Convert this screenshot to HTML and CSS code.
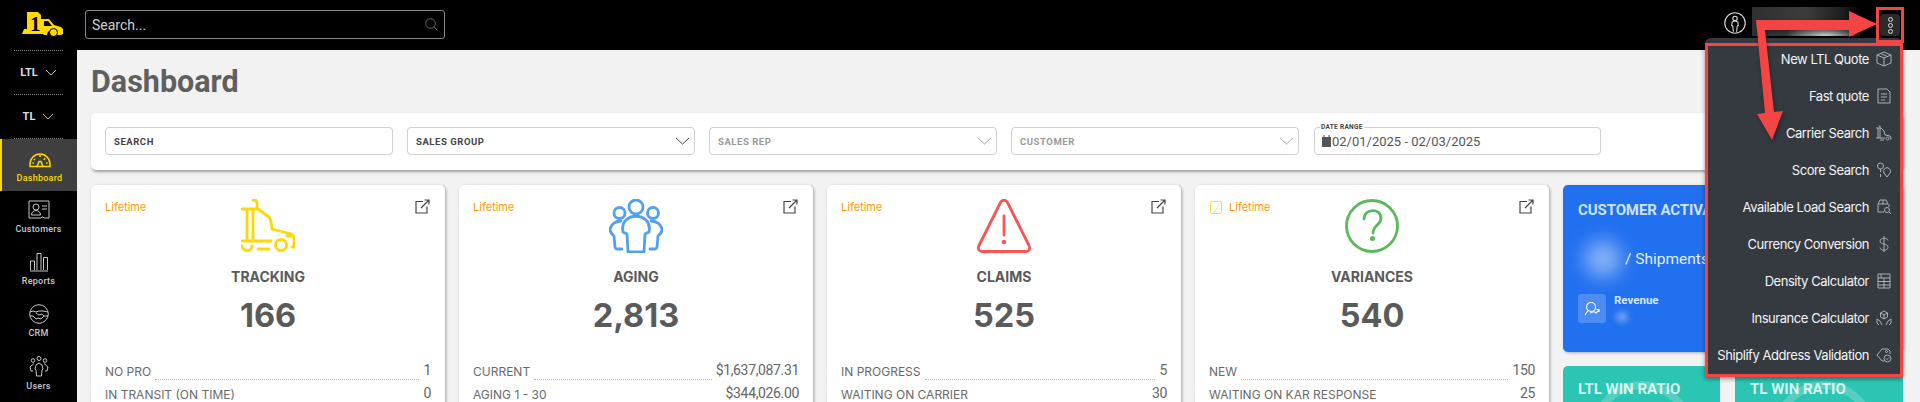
FILE: index.html
```html
<!DOCTYPE html>
<html lang="en">
<head>
<meta charset="utf-8">
<title>Dashboard</title>
<link rel="stylesheet" href="styles.css">
</head>
<body>
<div class="app">
  <aside class="sidebar">
    <div class="logo">
      <svg width="42" height="26" viewBox="0 0 42 26"><path fill="#ffd800" d="M5 0h11l3 3v4h8l5 6 7 2 2 2v5l-2 1h-4a5 5 0 0 0-10 0h-3l-1-1H0l2-5h3z"/><circle cx="31.500" cy="20.500" r="4" fill="#ffd800" stroke="#000" stroke-width="1"/><path fill="#000" d="M22 9h4l4 5h-8z"/><text x="8" y="19" class="logo-one">1</text></svg>
    </div>
    <div class="mode">LTL <svg width="12" height="7" viewBox="0 0 12 7"><path d="M1 1l5 5 5-5" class="thin"/></svg></div>
    <div class="mode">TL <svg width="12" height="7" viewBox="0 0 12 7"><path d="M1 1l5 5 5-5" class="thin"/></svg></div>
    <nav class="nav">
      <a class="nav-item active">
        <svg width="22" height="16" viewBox="0 0 22 16"><path d="M1 14.500V12a10 10 0 0 1 20 0v2.500zM8 14.500l2-5h2l2 5M5 7l1 1M11 3v2M16 6l-1 2M3.500 11h1.500M17 11h1.500" class="nav-icon"/></svg>
        <span>Dashboard</span>
      </a>
      <a class="nav-item">
        <svg width="22" height="20" viewBox="0 0 22 20"><path d="M1 1h20v17h-5l-1-1h-1l-1 1H1z" class="nav-icon"/><circle cx="8" cy="7" r="3" class="nav-icon"/><path d="M3.500 15c0-6 9-6 9 0zM14 6h5M14 9h5" class="nav-icon"/></svg>
        <span>Customers</span>
      </a>
      <a class="nav-item">
        <svg width="20" height="20" viewBox="0 0 20 20"><path d="M1 19h18M1.500 18V9h4v9M8 18V1.500h4V18M14.500 18V5.500h4V18" class="nav-icon"/></svg>
        <span>Reports</span>
      </a>
      <a class="nav-item">
        <svg width="20" height="20" viewBox="0 0 20 20"><circle cx="10" cy="10" r="9.300" class="nav-icon"/><path d="M1 8l3-1 3 1 3-1 4 0 5 1M1 12l3 0 3 3 2-1 3 1 3-3h4M7 9l3 2 3-1 2 2" class="nav-icon"/></svg>
        <span>CRM</span>
      </a>
      <a class="nav-item">
        <svg width="20" height="21" viewBox="0 0 20 21"><circle cx="10" cy="2.500" r="2" class="nav-icon"/><circle cx="4" cy="4.500" r="1.800" class="nav-icon"/><circle cx="16" cy="4.500" r="1.800" class="nav-icon"/><path d="M7.500 20l-.5-6-1-1 1-4 3-2 3 2 1 4-1 1-.5 6zM5 7.500L1 11l1 4h2M15 7.500l4 3.500-1 4h-2" class="nav-icon"/></svg>
        <span>Users</span>
      </a>
    </nav>
  </aside>

  <div class="main">
    <header class="topbar">
      <div class="global-search">
        <span>Search...</span>
        <svg width="13" height="13" viewBox="0 0 13 13"><circle cx="5.500" cy="5.500" r="4.800" class="search-glass"/><path d="M9 9l3.500 3.500" class="search-glass"/></svg>
      </div>
    </header>

    <div class="content">
      <h1>Dashboard</h1>
      <section class="filters">
        <div class="field strong">SEARCH</div>
        <div class="field strong">SALES GROUP<svg width="15" height="8" viewBox="0 0 15 8"><path d="M1 1l6.500 6L14 1" class="chev-dark"/></svg></div>
        <div class="field">SALES REP<svg width="15" height="8" viewBox="0 0 15 8"><path d="M1 1l6.500 6L14 1" class="chev"/></svg></div>
        <div class="field">CUSTOMER<svg width="15" height="8" viewBox="0 0 15 8"><path d="M1 1l6.500 6L14 1" class="chev"/></svg></div>
        <div class="field date">
          <label>DATE RANGE</label>
          <svg width="9" height="12" viewBox="0 0 9 12"><path fill="#555" d="M0 2h1.500V0h1v2h4V0h1v2H9v10H0z"/></svg>
          <span>02/01/2025 - 02/03/2025</span>
        </div>
      </section>

      <section class="board">
        <article class="card">
          <div class="card-head"><span class="lifetime">Lifetime</span>
            <svg class="open" width="15" height="15" viewBox="0 0 15 15"><path d="M8 2.500H1v11.500h11V7.500M6 9l8-8M9.500 1H14v4.500" class="open-stroke"/></svg></div>
          <svg class="hero" width="54" height="54" viewBox="0 0 54 54"><path d="M1 10h16M6 10v32M12 10v32M12 1h1c2 0 3 1 3 3v6M17 10l11 8c2 2 2 4 3 12l19 5c2 1 3 2 3 4v9h-2M1 42h29M1 47c1 6 10 6 10 0M17 50h11M46 37h5" class="tk"/><circle cx="40" cy="46" r="5.500" class="tk"/></svg>
          <h2>TRACKING</h2>
          <div class="big">166</div>
          <div class="row"><span>NO PRO</span><i></i><b>1</b></div>
          <div class="row"><span>IN TRANSIT (ON TIME)</span><i></i><b>0</b></div>
        </article>

        <article class="card">
          <div class="card-head"><span class="lifetime">Lifetime</span>
            <svg class="open" width="15" height="15" viewBox="0 0 15 15"><path d="M8 2.500H1v11.500h11V7.500M6 9l8-8M9.500 1H14v4.500" class="open-stroke"/></svg></div>
          <svg class="hero" width="54" height="54" viewBox="0 0 54 54"><circle cx="27" cy="8" r="7" class="ag"/><circle cx="10.500" cy="14" r="5.500" class="ag"/><circle cx="44" cy="14" r="5.500" class="ag"/><path d="M19 53l-1-18-4-2c-1-5 0-9 3-12 6-5 14-5 20 0 3 3 4 7 3 12l-4 2-1 18zM12 22c-5 0-10 3-11 8 0 3 1 4 4 7l1 11c0 1 1 2 2 2h5M42 22c5 0 10 3 11 8 0 3-1 4-4 7l-1 11c0 1-1 2-2 2h-5" class="ag"/></svg>
          <h2>AGING</h2>
          <div class="big">2,813</div>
          <div class="row"><span>CURRENT</span><i></i><b>$1,637,087.31</b></div>
          <div class="row"><span>AGING 1 - 30</span><i></i><b>$344,026.00</b></div>
        </article>

        <article class="card">
          <div class="card-head"><span class="lifetime">Lifetime</span>
            <svg class="open" width="15" height="15" viewBox="0 0 15 15"><path d="M8 2.500H1v11.500h11V7.500M6 9l8-8M9.500 1H14v4.500" class="open-stroke"/></svg></div>
          <svg class="hero" width="54" height="54" viewBox="0 0 54 54"><path d="M23.500 3.500c1.500-3 5.500-3 7 0l21.500 43c1.500 3.500 0 6-3 6H5c-3 0-4.500-2.500-3-6z" class="cl"/><path d="M27 17v19" class="cl"/><circle cx="27" cy="43" r="2.300" class="cl-dot"/></svg>
          <h2>CLAIMS</h2>
          <div class="big">525</div>
          <div class="row"><span>IN PROGRESS</span><i></i><b>5</b></div>
          <div class="row"><span>WAITING ON CARRIER</span><i></i><b>30</b></div>
        </article>

        <article class="card">
          <div class="card-head"><span class="check"><svg width="12" height="12" viewBox="0 0 12 12"><path d="M3 10.500L9 1" class="check-mark"/></svg></span><span class="lifetime">Lifetime</span>
            <svg class="open" width="15" height="15" viewBox="0 0 15 15"><path d="M8 2.500H1v11.500h11V7.500M6 9l8-8M9.500 1H14v4.500" class="open-stroke"/></svg></div>
          <svg class="hero" width="54" height="54" viewBox="0 0 54 54"><circle cx="27" cy="27" r="25.500" class="va"/><path d="M19 20c0-11 17-11 17-1 0 7-8 7-8 15" class="va"/><circle cx="27.500" cy="39.500" r="2.500" class="va-dot"/></svg>
          <h2>VARIANCES</h2>
          <div class="big">540</div>
          <div class="row"><span>NEW</span><i></i><b>150</b></div>
          <div class="row"><span>WAITING ON KAR RESPONSE</span><i></i><b>25</b></div>
        </article>

        <div class="side">
          <article class="activation">
            <h3>CUSTOMER ACTIVATION</h3>
            <div class="ship"><span class="blob"></span><span>/ Shipments</span></div>
            <div class="revenue">
              <span class="rev-icon"><svg width="16" height="16" viewBox="0 0 16 16"><circle cx="7" cy="6" r="4.500" class="rev"/><path d="M4 9.500L1 14M6 12l4-1.500 2 1.500 3-3M12.500 8.500h2.500V11" class="rev"/></svg></span>
              <div><strong>Revenue</strong><span class="blob-small"></span></div>
            </div>
          </article>
          <div class="ratios">
            <article class="ratio"><h3>LTL WIN RATIO</h3><span class="ring"></span></article>
            <article class="ratio"><h3>TL WIN RATIO</h3><span class="ring"></span></article>
          </div>
        </div>
      </section>
    </div>
  </div>
</div>

<div class="account">
  <svg width="22" height="22" viewBox="0 0 20 20"><circle cx="10" cy="10" r="9.300" class="acct"/><circle cx="10" cy="5.800" r="2" class="acct"/><path d="M8.500 18l-.5-5-1-1 .5-3 2.500-1 2.500 1 .5 3-1 1-.5 5" class="acct"/></svg>
  <span class="acct-name"></span>
  <span class="kebab"><i></i><i></i><i></i></span>
</div>

<div class="menu">
  <ul class="menu-list">
    <li>New LTL Quote<svg width="16" height="16" viewBox="0 0 16 16"><path d="M1 4l7-3 7 3v8l-7 3-7-3zM1 4l7 3 7-3M8 7v8M4.500 2.500l7 3" class="mi"/></svg></li>
    <li>Fast quote<svg width="16" height="16" viewBox="0 0 16 16"><path d="M2 1h9l3 3v11H2zM5 6h6M5 9h6M5 12h4" class="mi"/></svg></li>
    <li>Carrier Search<svg width="16" height="16" viewBox="0 0 16 16"><path d="M0 3h5M2 3v10M4 3v10M3 1h1v2M5 3l3 3 1 4 5 1 1 2v1h-1M0 13h9M4 15h4" class="mi"/><circle cx="11.500" cy="13.500" r="1.500" class="mi"/></svg></li>
    <li>Score Search<svg width="16" height="16" viewBox="0 0 16 16"><circle cx="4.500" cy="4" r="3" class="mi"/><path d="M4.500 7v3M4.500 12v3M11 15l-3-4a3.500 3.500 0 1 1 6 0z" class="mi"/></svg></li>
    <li>Available Load Search<svg width="16" height="16" viewBox="0 0 16 16"><path d="M4 1h6l2 4H2zM2 5v8h6M13 5v3M7 1v4" class="mi"/><circle cx="11" cy="11" r="2.500" class="mi"/><path d="M13 13l2 2" class="mi"/></svg></li>
    <li>Currency Conversion<svg width="16" height="16" viewBox="0 0 16 16"><path d="M12 4.500C12 1.500 4 1.500 4 5c0 4 8 2 8 6.500C12 15 4 15 4 11.500M8 0v16" class="mi"/></svg></li>
    <li>Density Calculator<svg width="16" height="16" viewBox="0 0 16 16"><path d="M2 1h12v14H2zM2 5h12M2 8.500h12M2 12h12M8 5v10M5 1v4" class="mi"/></svg></li>
    <li>Insurance Calculator<svg width="16" height="16" viewBox="0 0 16 16"><path d="M8 1l3.500 2v4L8 9 4.500 7V3zM4.500 3L8 5l3.500-2M8 5v4M1 9l3 2 2 4M15 9l-3 2-2 4M1 9v4l2 2M15 9v4l-2 2" class="mi"/></svg></li>
    <li>Shiplify Address Validation<svg width="16" height="16" viewBox="0 0 16 16"><path d="M1 8l5-6h6l2 2v3M1 8l5 6h2" class="mi"/><circle cx="11.500" cy="11.500" r="3.500" class="mi"/><path d="M10 11.500l1 1 2-2" class="mi"/><circle cx="10.500" cy="4.500" r="1" class="mi"/></svg></li>
  </ul>
</div>

<span class="button-highlight"></span>
<svg class="arrows" width="1920" height="402" viewBox="0 0 1920 402">
  <path d="M1756 20H1849V11L1877 24 1849 37V30H1765L1774 112 1783 111 1772 140 1757 114 1765 113z" class="arrow"/>
</svg>
</body>
</html>
```

FILE: styles.css
```css
* { box-sizing: border-box; margin: 0; padding: 0; }
html, body { height: 402px; overflow: hidden; }
body { font-family: Inter, "Liberation Sans", sans-serif; background: #f2f2f2; color: #5a5a5a; position: relative; }
svg { display: block; flex: none; }

.app { display: flex; height: 402px; }

/* sidebar */
.sidebar { width: 77px; flex: none; background: #000; display: flex; flex-direction: column; }
.logo { height: 51px; margin: 0 14px; padding: 12px 0 0 8px; border-bottom: 1px dotted #888; }
.logo-one { font: 900 21px "Liberation Serif", serif; fill: #000; }
.mode { height: 44px; margin: 0 14px; border-bottom: 1px dotted #888; display: flex; align-items: center; justify-content: center; gap: 7px; color: #ddd; font: 700 11px Roboto, sans-serif; }
.thin { fill: none; stroke: #bbb; stroke-width: 1; }
.nav { display: flex; flex-direction: column; }
.nav-item { height: 52px; display: flex; flex-direction: column; align-items: center; justify-content: center; gap: 4px; color: #c8c8c8; font: 500 9px Roboto, sans-serif; letter-spacing: .25px; }
.nav-item.active { background: #3e3f3e; border-left: 2px solid #ffd800; color: #ffd800; padding-top: 4px; gap: 5px; }
.nav-icon { fill: none; stroke: #c8c8c8; stroke-width: 1; }
.active .nav-icon { stroke: #ffd800; stroke-width: 1.500; }

/* top bar */
.main { flex: 1; min-width: 0; display: flex; flex-direction: column; }
.topbar { height: 50px; flex: none; background: #000; padding: 10px 8px; }
.global-search { width: 360px; height: 29px; border: 1px solid #888; border-radius: 3px; display: flex; align-items: center; justify-content: space-between; padding: 0 6px; color: #d0d0d0; font: 400 14px Roboto, sans-serif; }
.search-glass { fill: none; stroke: #666; stroke-width: 1; }

/* content */
.content { padding: 15px 17px 0 14px; }
h1 { font: 700 30.500px/34px Roboto, sans-serif; color: #5f5f5f; margin-bottom: 14px; height: 34px; }
.filters { height: 57px; background: #fff; border-radius: 5px; box-shadow: 1px 2px 3px rgba(0,0,0,.35); padding: 14px; display: flex; gap: 14px; }
.field { width: 288px; height: 28px; border: 1px solid #d0d0d0; border-radius: 4px; display: flex; align-items: center; justify-content: space-between; padding: 0 4px 0 8px; font: 700 9.500px Roboto, sans-serif; letter-spacing: .55px; color: #999; }
.field.strong { color: #444; }
.chev { fill: none; stroke: #aaa; }
.chev-dark { fill: none; stroke: #444; }
.field.date { position: relative; justify-content: flex-start; gap: 1px; font: 400 13px Roboto, sans-serif; letter-spacing: 0; color: #555; margin-left: 1px; padding-left: 7px; width: 287px; }
.field.date label { position: absolute; left: 5px; top: -5px; padding: 0 1px; background: #fff; font: 700 6.500px/8px Roboto, sans-serif; letter-spacing: .3px; color: #444; }

/* cards */
.board { display: flex; gap: 14px; margin-top: 15px; align-items: flex-start; }
.card { position: relative; width: 354px; flex: none; height: 240px; background: #fff; border-radius: 5px; box-shadow: 1px 1px 3px rgba(0,0,0,.35); padding: 14px 14px 0; display: flex; flex-direction: column; align-items: center; }
.card-head { position: absolute; left: 14px; right: 15px; top: 14px; display: flex; align-items: center; }
.lifetime { font: 400 11px/14px Inter, sans-serif; color: #ff9a0d; }
.check { width: 12px; height: 13px; border: 1px solid #ffd84a; border-radius: 2px; margin: 2px 7px 0 1px; }
.check-mark { stroke: #ffd84a; stroke-width: .8; fill: none; }
.open { margin-left: auto; }
.open-stroke { fill: none; stroke: #444; stroke-width: 1.200; }
.tk, .ag, .cl, .va { fill: none; stroke-width: 2.800; stroke-linecap: round; stroke-linejoin: round; }
.tk { stroke: #ffd800; }
.ag { stroke: #53a0f3; }
.cl { stroke: #f95555; }
.cl-dot { fill: #f95555; }
.va { stroke: #5cb85c; }
.va-dot { fill: #5cb85c; }
h2 { font: 700 14px/18px Inter, sans-serif; color: #5a5a5a; margin-top: 15px; }
.big { font: 700 32.500px/40px Inter, sans-serif; color: #5a5a5a; margin: 10px 0 22px; }
.row { width: 100%; display: flex; align-items: flex-end; height: 23px; font: 400 12px/16px Inter, sans-serif; color: #6a6a6a; flex: none; }
.row span { white-space: nowrap; padding-bottom: 1px; }
.row i { flex: 1; border-bottom: 1px dotted #bbb; margin: 0 4px 1px; height: 1px; }
.row b { margin-left: auto; font: 400 14px/20px Roboto, sans-serif; letter-spacing: -.35px; color: #666; padding-bottom: 1px; }

/* right column */
.side { flex: 1; min-width: 0; display: flex; flex-direction: column; gap: 14px; }
.activation { height: 167px; background: #2170f0; border-radius: 5px; box-shadow: 1px 1px 3px rgba(0,0,0,.3); padding: 15px; color: #cfe3ff; overflow: hidden; }
.activation h3, .ratio h3 { font: 700 15px/20px Roboto, sans-serif; white-space: nowrap; }
.activation h3 { letter-spacing: -.1px; }
.ship { display: flex; align-items: center; height: 60px; margin-top: 9px; gap: 4px; font: 400 15.500px Roboto, sans-serif; color: #e2eeff; }
.blob { width: 36px; height: 36px; margin-left: 7px; border-radius: 50%; background: rgba(255,255,255,.5); filter: blur(10px); }
.revenue { display: flex; gap: 8px; margin-top: 5px; }
.rev-icon { width: 28px; height: 29px; border-radius: 3px; background: rgba(255,255,255,.2); display: flex; align-items: center; justify-content: center; }
.rev { fill: none; stroke: #fff; stroke-width: 1.100; }
.revenue strong { display: block; font: 700 11.500px/14px Roboto, sans-serif; margin-top: -1px; color: #d8e8ff; }
.blob-small { display: block; width: 12px; height: 10px; margin: 5px 0 0 2px; border-radius: 50%; background: rgba(255,255,255,.4); filter: blur(3px); }
.ratios { display: grid; grid-template-columns: 157px 1fr; gap: 15px; }
.ratio { position: relative; height: 100px; background: #2cc4b2; border-radius: 5px 5px 0 0; padding: 13px 15px; color: #d3f3ee; overflow: hidden; }
.ring { position: absolute; left: 28px; top: 15px; width: 102px; height: 102px; border: 8px solid rgba(255,255,255,.2); border-radius: 50%; }
.ratio + .ratio .ring { left: 38px; }

/* overlays */
.account { position: absolute; top: 7px; left: 1724px; display: flex; align-items: flex-start; }
.acct { fill: none; stroke: #ddd; stroke-width: 1; }
.account svg { margin-top: 5px; }
.acct-name { width: 108px; height: 29px; margin-left: 6px; background: radial-gradient(ellipse 40px 14px at 68% 100%, #cfcfcf, transparent), linear-gradient(90deg, #303030, #3c3c3c 50%, #1c1c1c 85%, #000); }
.kebab { width: 20px; height: 22px; margin: 7px 0 0 20px; background: #2b2b2b; border-radius: 4px; display: flex; flex-direction: column; align-items: center; justify-content: center; gap: 1px; }
.kebab i { width: 5px; height: 5px; border: 1px solid #ddd; border-radius: 50%; }
.button-highlight { position: absolute; left: 1876px; top: 7px; width: 28px; height: 36px; border: 3px solid #f44444; }
.menu { position: absolute; left: 1705px; top: 38px; width: 198px; padding-top: 5px; background: #343a40; border-radius: 6px 6px 0 0; box-shadow: 0 2px 4px rgba(0,0,0,.4); }
.menu-list { list-style: none; border: 3px solid #f44444; padding: 0 8px 6px 8px; display: flex; flex-direction: column; gap: 11px; }
.menu-list li { height: 26px; display: flex; align-items: center; justify-content: flex-end; gap: 7px; font: 400 13px Inter, sans-serif; letter-spacing: -.45px; color: #f5f5f5; white-space: nowrap; }
.mi { fill: none; stroke: #adb0b3; stroke-width: 1; }
.arrows { position: absolute; left: 0; top: 0; pointer-events: none; filter: drop-shadow(1px 2px 2px rgba(0,0,0,.35)); }
.arrow { fill: #f44444; }
```
